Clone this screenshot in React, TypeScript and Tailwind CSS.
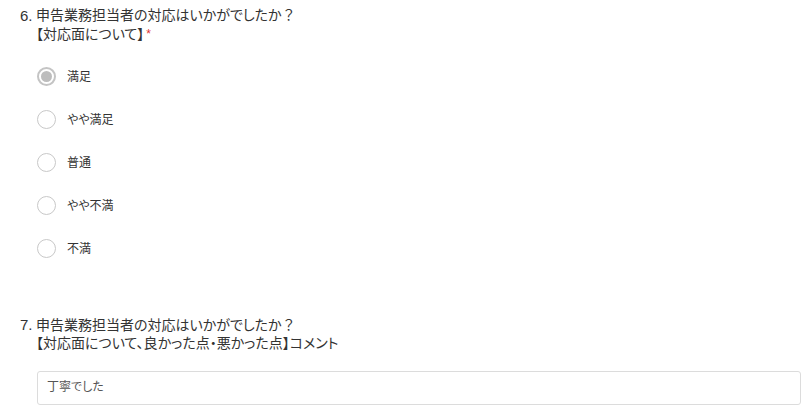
import React from "react";

const font = { fontFamily: '"Liberation Sans", "Noto Sans CJK JP", sans-serif' };

function Radio({ label, checked }: { label: string; checked?: boolean }) {
  return (
    <div className="flex items-center h-[43px]">
      {checked ? (
        <span className="w-[19px] h-[19px] rounded-full border-2 border-[#c4c4c4] flex items-center justify-center bg-white">
          <span className="w-[11px] h-[11px] rounded-full bg-[#bdbdbd]" />
        </span>
      ) : (
        <span className="w-[19px] h-[19px] rounded-full border border-[#c8c8c8] bg-white" />
      )}
      <span className="ml-[11px] text-[12px] text-[#333]">{label}</span>
    </div>
  );
}

export default function App() {
  return (
    <div
      className="w-[809px] h-[412px] bg-white overflow-hidden text-[#333] [font-feature-settings:'palt']"
      style={font}
    >
      <div className="pl-[20px] pt-[6px]">
        <div className="flex text-[14px] leading-[19px]">
          <span className="w-[16px] text-[15px]">6.</span>
          <div>
            <div>
              申告業務担当者の対応はいかがでしたか<span className="[font-feature-settings:normal]">？</span>
            </div>
            <div>
              【対応面について】<span className="text-[#d33] text-[12px] ml-[2px] align-top">*</span>
            </div>
          </div>
        </div>
        <div className="pl-[17px] mt-[11px]">
          <Radio label="満足" checked />
          <Radio label="やや満足" />
          <Radio label="普通" />
          <Radio label="やや不満" />
          <Radio label="不満" />
        </div>
        <div className="flex text-[14px] leading-[18px] mt-[46px]">
          <span className="w-[16px] text-[15px]">7.</span>
          <div>
            <div>
              申告業務担当者の対応はいかがでしたか<span className="[font-feature-settings:normal]">？</span>
            </div>
            <div>【対応面について、良かった点・悪かった点】コメント</div>
          </div>
        </div>
        <div className="ml-[17px] mt-[19px] w-[764px] h-[34px] border border-[#dcdcdc] rounded-[3px] pl-[9px] pt-[6px] text-[12px] text-[#555]">
          丁寧でした
        </div>
      </div>
    </div>
  );
}
